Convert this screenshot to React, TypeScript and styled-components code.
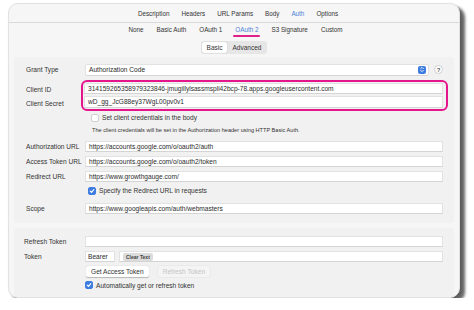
import styled, { createGlobalStyle } from 'styled-components';

const GlobalStyle = createGlobalStyle`
  html, body {
    margin: 0;
    padding: 0;
    background: #ffffff;
  }
  body {
    font-family: "Liberation Sans", Arial, sans-serif;
    color: #2b2b2b;
  }
`;

const Window = styled.div`
  margin: 3px 0 0 8px;
  width: 452px;
  height: 295px;
  box-sizing: border-box;
  background: #f6f6f6;
  border-radius: 10px;
  border: 1px solid #e2e2e2;
  box-shadow: 5px 4px 3px rgba(0, 0, 0, 0.6), 1px 1px 2px rgba(0, 0, 0, 0.15);
  display: flex;
  flex-direction: column;
  overflow: hidden;
`;

const TabBar = styled.div<{ $small?: boolean }>`
  display: flex;
  justify-content: center;
  align-items: center;
  gap: ${p => (p.$small ? '11px' : '10px')};
  height: ${p => (p.$small ? '15px' : '19px')};
  padding-top: ${p => (p.$small ? '0' : '1px')};
  border-bottom: ${p => (p.$small ? 'none' : '1px solid #d9d9d9')};
  padding-left: ${p => (p.$small ? '3px' : '8px')};
`;

const Tab = styled.span<{ $active?: boolean }>`
  position: relative;
  font-size: 6.3px;
  color: ${p => (p.$active ? '#4a7fd6' : '#333')};
  padding: 0 1px;
`;

const Underline = styled.span`
  position: absolute;
  left: -1px;
  right: -1px;
  bottom: -4px;
  height: 2px;
  background: #e0218a;
  border-radius: 1px;
`;

const Segmented = styled.div`
  align-self: center;
  display: flex;
  margin: 4px 0 3px 0;
  background: #e6e6e6;
  border-radius: 3px;
  padding: 1px;
  height: 11px;
`;

const Segment = styled.span<{ $active?: boolean }>`
  font-size: 6.5px;
  padding: 0 5px;
  line-height: 11px;
  border-radius: 2px;
  background: ${p => (p.$active ? '#ffffff' : 'transparent')};
  box-shadow: ${p => (p.$active ? '0 0 1px rgba(0,0,0,0.3)' : 'none')};
  color: #333;
`;

const Panel = styled.div<{ $tight?: boolean }>`
  margin: 0 5px;
  background: #f1f1f1;
  border-radius: 3px;
  padding: ${p => (p.$tight ? '6px 11px 6px 10px' : '6px 11px 7px 12px')};
  display: flex;
  flex-direction: column;
`;

const Row = styled.div<{ $h?: number; $mt?: number }>`
  display: flex;
  align-items: center;
  height: ${p => p.$h ?? 15}px;
  margin-top: ${p => p.$mt ?? 0}px;
`;

const Label = styled.span<{ $w?: number }>`
  width: ${p => p.$w ?? 59}px;
  flex: none;
  font-size: 6.6px;
  color: #333;
  white-space: nowrap;
`;

const Field = styled.div`
  flex: 1;
  height: 11px;
  background: #ffffff;
  border: 1px solid #e2e2e2;
  border-bottom-color: #d4d4d4;
  box-sizing: border-box;
  display: flex;
  align-items: center;
  padding-left: 3px;
  font-size: 6.6px;
  color: #2b2b2b;
  white-space: nowrap;
  overflow: hidden;
  gap: 4px;
`;

const SelectField = styled(Field)`
  height: 12px;
  padding-right: 2px;
  justify-content: space-between;
  border-radius: 2px;
`;

const Stepper = styled.span`
  width: 8px;
  height: 8px;
  border-radius: 2px;
  background: #3f7de0;
  display: flex;
  align-items: center;
  justify-content: center;
`;

const Help = styled.span`
  width: 9px;
  height: 9px;
  margin-left: 5px;
  border-radius: 50%;
  background: #fff;
  border: 1px solid #d0d0d0;
  box-sizing: border-box;
  font-size: 6px;
  font-weight: bold;
  color: #555;
  display: flex;
  align-items: center;
  justify-content: center;
`;

const GroupRow = styled.div`
  display: flex;
  margin-top: 3px;
`;

const LabelStack = styled.div`
  width: 59px;
  flex: none;
  display: flex;
  flex-direction: column;
  padding-top: 3px;
`;

const StackLabel = styled(Label)`
  height: 14px;
  line-height: 14px;
`;

const Highlight = styled.div`
  flex: 1;
  margin: 0 -5px 0 -4px;
  padding: 1px 3px 1px 1px;
  border: 2px solid #e5168c;
  border-radius: 6px;
  display: flex;
  flex-direction: column;
  gap: 2px;
`;

const HighlightField = styled(Field)`
  height: 13px;
`;

const CheckRow = styled.div<{ $mt?: number; $ml?: number }>`
  display: flex;
  align-items: center;
  gap: 3px;
  height: 12px;
  margin-top: ${p => p.$mt ?? 0}px;
  margin-left: ${p => p.$ml ?? 62}px;
  font-size: 6.6px;
  color: #333;
`;

const Box = styled.span<{ $checked?: boolean }>`
  width: 8px;
  height: 8px;
  box-sizing: border-box;
  border-radius: 2px;
  background: ${p => (p.$checked ? '#3f7de0' : '#ffffff')};
  border: 1px solid ${p => (p.$checked ? '#3f7de0' : '#cfcfcf')};
  display: flex;
  align-items: center;
  justify-content: center;
`;

const Hint = styled.div`
  margin-left: 66px;
  height: 12px;
  line-height: 12px;
  font-size: 5.6px;
  color: #333;
`;

const Gap = styled.div<{ $h: number }>`
  height: ${p => p.$h}px;
`;

const Bearer = styled(Field)`
  flex: none;
  width: 30px;
  margin-right: 4px;
  padding-left: 2px;
`;

const Tag = styled.span`
  background: #dcdcdc;
  border-radius: 2px;
  font-size: 5px;
  font-weight: bold;
  color: #444;
  padding: 1px 3px;
  line-height: 6px;
`;

const ButtonRow = styled.div`
  display: flex;
  gap: 9px;
  margin-left: 62px;
  height: 14px;
  align-items: center;
`;

const Button = styled.span<{ $disabled?: boolean }>`
  height: 11px;
  line-height: 11px;
  padding: 0 5px;
  font-size: 6.6px;
  border-radius: 2px;
  background: ${p => (p.$disabled ? '#f4f4f4' : '#ffffff')};
  color: ${p => (p.$disabled ? '#c4c4c4' : '#333')};
  box-shadow: ${p => (p.$disabled ? '0 0 0 0.5px #e4e4e4' : '0 0.5px 1px rgba(0,0,0,0.25)')};
`;

const Check = () => (
  <svg width="6" height="6" viewBox="0 0 10 10">
    <path d="M2 5.2 L4.2 7.4 L8 2.8" fill="none" stroke="#fff" strokeWidth="1.8" strokeLinecap="round" strokeLinejoin="round" />
  </svg>
);

const Chevrons = () => (
  <svg width="6" height="7" viewBox="0 0 6 8">
    <path d="M1.5 3 L3 1.5 L4.5 3 M1.5 5 L3 6.5 L4.5 5" fill="none" stroke="#fff" strokeWidth="1" strokeLinecap="round" strokeLinejoin="round" />
  </svg>
);

const topTabs = ['Description', 'Headers', 'URL Params', 'Body', 'Auth', 'Options'];
const authTabs = ['None', 'Basic Auth', 'OAuth 1', 'OAuth 2', 'S3 Signature', 'Custom'];

const urlRows = [
  { label: 'Authorization URL', value: 'https://accounts.google.com/o/oauth2/auth' },
  { label: 'Access Token URL', value: 'https://accounts.google.com/o/oauth2/token' },
  { label: 'Redirect URL', value: 'https://www.growthgauge.com/' },
];

export default function App() {
  return (
    <>
      <GlobalStyle />
      <Window>
        <TabBar>
          {topTabs.map(t => (
            <Tab key={t} $active={t === 'Auth'}>{t}</Tab>
          ))}
        </TabBar>
        <TabBar $small>
          {authTabs.map(t => (
            <Tab key={t} $active={t === 'OAuth 2'}>
              {t}
              {t === 'OAuth 2' && <Underline />}
            </Tab>
          ))}
        </TabBar>
        <Segmented>
          <Segment $active>Basic</Segment>
          <Segment>Advanced</Segment>
        </Segmented>

        <Panel>
          <Row $h={14}>
            <Label>Grant Type</Label>
            <SelectField>
              Authorization Code
              <Stepper><Chevrons /></Stepper>
            </SelectField>
            <Help>?</Help>
          </Row>

          <GroupRow>
            <LabelStack>
              <StackLabel>Client ID</StackLabel>
              <StackLabel>Client Secret</StackLabel>
            </LabelStack>
            <Highlight>
              <HighlightField>314159265358979323846-jmugillylsassmspli42bcp-78.apps.googleusercontent.com</HighlightField>
              <HighlightField>wD_gg_JcG88ey37WgL00pv0v1</HighlightField>
            </Highlight>
          </GroupRow>

          <CheckRow $mt={1} $ml={65}>
            <Box />
            Set client credentials in the body
          </CheckRow>
          <Hint>The client credentials will be set in the Authorization header using HTTP Basic Auth.</Hint>

          <Gap $h={3} />
          {urlRows.map(r => (
            <Row key={r.label}>
              <Label>{r.label}</Label>
              <Field>{r.value}</Field>
            </Row>
          ))}
          <CheckRow $ml={62} $mt={1}>
            <Box $checked><Check /></Box>
            Specify the Redirect URL in requests
          </CheckRow>
          <Row $mt={4}>
            <Label>Scope</Label>
            <Field>https://www.googleapis.com/auth/webmasters</Field>
          </Row>
        </Panel>

        <Gap $h={6} />

        <Panel $tight>
          <Row>
            <Label $w={61}>Refresh Token</Label>
            <Field />
          </Row>
          <Row>
            <Label $w={61}>Token</Label>
            <Bearer>Bearer</Bearer>
            <Field><Tag>Clear Text</Tag></Field>
          </Row>
          <ButtonRow>
            <Button>Get Access Token</Button>
            <Button $disabled>Refresh Token</Button>
          </ButtonRow>
          <CheckRow $ml={61} $mt={1}>
            <Box $checked><Check /></Box>
            Automatically get or refresh token
          </CheckRow>
        </Panel>
      </Window>
    </>
  );
}
